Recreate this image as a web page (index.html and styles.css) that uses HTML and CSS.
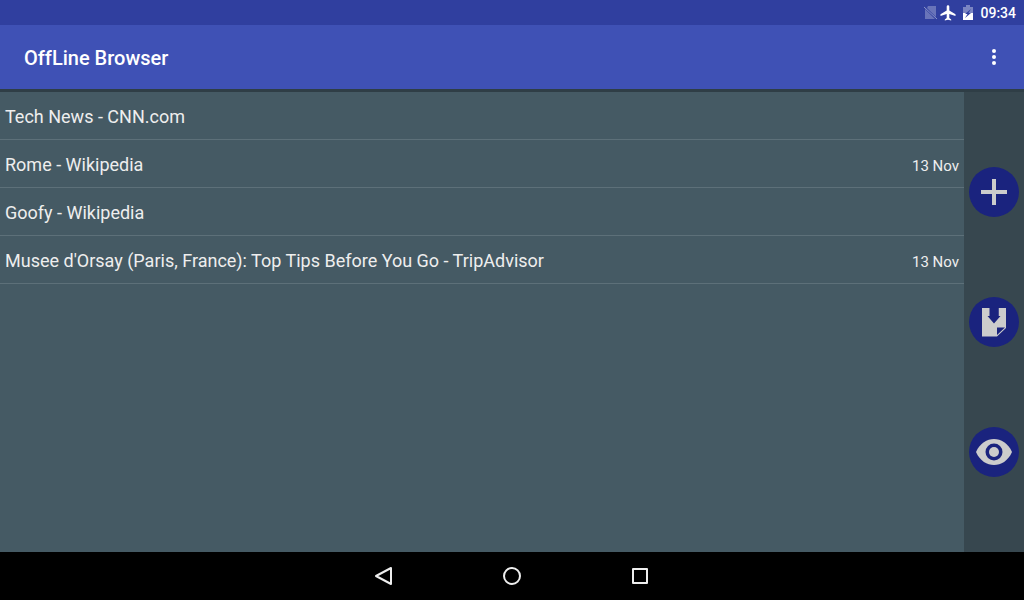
FILE: index.html
```html
<!DOCTYPE html>
<html lang="en">
<head>
    <meta charset="UTF-8">
    <meta name="viewport" content="width=device-width, initial-scale=1.0">
    <title>OffLine Browser</title>
    <link rel="stylesheet" href="styles.css">
</head>
<body>
    <div class="status-bar">
        <svg class="status-sim" width="14" height="14" viewBox="0 0 14 14">
            <path fill="#6974b9" d="M4 0h8v11L3 2zM1 3l10 10H1z"/>
            <path fill="none" stroke="#8c95ca" d="M0 1l13 12"/>
        </svg>
        <svg class="status-plane" width="16" height="16" viewBox="0 0 16 16">
            <path fill="#fff" d="M15.500 11V9.300L9.300 5.400V1.600a1.300 1.300 0 0 0-2.600 0v3.800L0.500 9.300V11l6.200-1.900v4l-1.900 1.300v1.200L8 14.700l3.200 0.900v-1.200l-1.900-1.300v-4z"/>
        </svg>
        <svg class="status-battery" width="10" height="16" viewBox="0 0 10 16">
            <path fill="#7b85c2" d="M0 2h3V0h4v2h3v6H0z"/>
            <path fill="#fff" d="M0 8h10v7H0z"/>
            <path fill="#303f9f" d="M8 4L2 9h2.500L2 13l6-5H5.500z"/>
        </svg>
        <span class="clock">09:34</span>
    </div>

    <header class="app-bar">
        <h1>OffLine Browser</h1>
        <button class="menu-button" aria-label="More options">
            <svg width="6" height="18" viewBox="0 0 6 18" fill="#fff">
                <circle cx="3" cy="3" r="2"/>
                <circle cx="3" cy="9" r="2"/>
                <circle cx="3" cy="15" r="2"/>
            </svg>
        </button>
    </header>

    <main class="content">
        <ul class="page-list">
            <li><a href="#"><span>Tech News - CNN.com</span></a></li>
            <li><a href="#"><span>Rome - Wikipedia</span><span class="date">13 Nov</span></a></li>
            <li><a href="#"><span>Goofy - Wikipedia</span></a></li>
            <li><a href="#"><span>Musee d'Orsay (Paris, France): Top Tips Before You Go - TripAdvisor</span><span class="date">13 Nov</span></a></li>
        </ul>
        <div class="actions">
            <button class="round-button" aria-label="Add">
                <svg viewBox="0 0 50 50"><path fill="#ccc" d="M23 12h4v11h11v4H27v11h-4V27H12v-4h11z"/></svg>
            </button>
            <button class="round-button" aria-label="Save page">
                <svg viewBox="0 0 50 50">
                    <path fill="#ccc" d="M13 11h8v8H18.500l6.500 7.500 6.500-7.500H29.500V11H37v20l-9 8.500H13z"/>
                    <path fill="#1a237e" d="M20.500 10.500h9v8.500h-9zM28 30.500h8l-8 7.500z"/>
                </svg>
            </button>
            <button class="round-button" aria-label="View">
                <svg viewBox="0 0 50 50">
                    <path fill="#ccc" d="M7 25C11 16 18 12 25 12s14 4 18 13c-4 9-11 13-18 13S11 34 7 25z"/>
                    <circle cx="25" cy="25" r="8.500" fill="#1a237e"/>
                    <circle cx="25" cy="25" r="5" fill="#ccc"/>
                </svg>
            </button>
        </div>
    </main>

    <nav class="nav-bar">
        <button aria-label="Back">
            <svg viewBox="0 0 24 24"><path d="M19 4v16L4 12z"/></svg>
        </button>
        <button aria-label="Home">
            <svg viewBox="0 0 24 24"><circle cx="12" cy="12" r="8"/></svg>
        </button>
        <button aria-label="Recent apps">
            <svg viewBox="0 0 24 24"><path d="M5 5h14v14H5z"/></svg>
        </button>
    </nav>
</body>
</html>
```
FILE: styles.css
```css
* {
    box-sizing: border-box;
}
body {
    display: flex;
    flex-direction: column;
    min-height: 100vh;
    margin: 0;
    background: #455a64;
    color: #eee;
    font-family: Roboto, sans-serif;
}
button {
    display: flex;
    align-items: center;
    justify-content: center;
    padding: 0;
    border: none;
    background: none;
    cursor: pointer;
}
.status-bar {
    display: flex;
    align-items: center;
    justify-content: flex-end;
    height: 25px;
    padding-right: 8px;
    background: #303f9f;
    color: #fff;
}
.status-sim {
    margin-right: 2px;
}
.status-battery {
    margin: 0 7px;
}
.clock {
    font-size: 14px;
    font-weight: 500;
    line-height: 26px;
}
.app-bar {
    display: flex;
    align-items: center;
    justify-content: space-between;
    height: 64px;
    padding: 0 10px 0 24px;
    background: #3f51b5;
}
h1 {
    margin: 0;
    padding-top: 2px;
    color: #fff;
    font-size: 20px;
    font-weight: 500;
    line-height: 24px;
}
.menu-button {
    width: 40px;
    height: 48px;
}
.content {
    display: flex;
    flex: 1;
    border-top: 3px solid #2f3e46;
}
.page-list {
    flex: 1;
    margin: 0;
    padding: 0;
    list-style: none;
}
.page-list a {
    display: flex;
    align-items: baseline;
    justify-content: space-between;
    padding: 13px 5px 10px;
    border-bottom: 1px solid #5d7079;
    color: #eee;
    font-size: 18px;
    line-height: 24px;
    text-decoration: none;
}
.page-list .date {
    font-size: 15px;
    line-height: 20px;
}
.actions {
    display: flex;
    flex-direction: column;
    align-items: center;
    justify-content: center;
    gap: 80px;
    width: 60px;
    background: #37474f;
}
.round-button {
    width: 50px;
    height: 50px;
    border-radius: 50%;
    background: #1a237e;
}
.round-button svg {
    width: 50px;
    height: 50px;
}
.nav-bar {
    display: flex;
    align-items: center;
    justify-content: center;
    height: 48px;
    background: #000;
}
.nav-bar button {
    width: 128px;
    height: 48px;
}
.nav-bar svg {
    width: 24px;
    height: 24px;
    fill: none;
    stroke: #eee;
    stroke-width: 2;
    stroke-linejoin: round;
}
```
